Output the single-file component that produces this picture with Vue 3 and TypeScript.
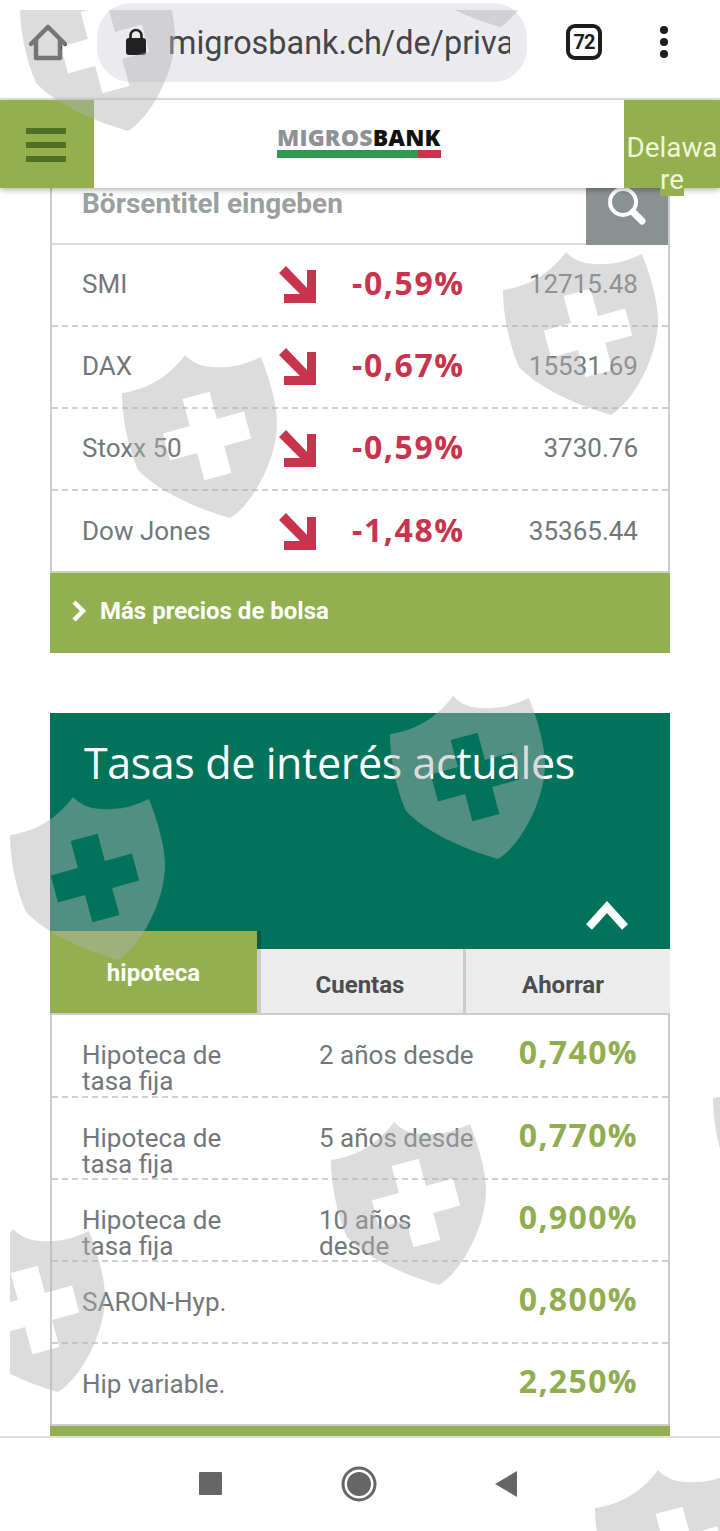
<script setup lang="ts">
interface Quote { name: string; pct: string; value: string }
interface Rate { name: string; term: string; value: string }

const quotes: Quote[] = [
  { name: 'SMI', pct: '-0,59%', value: '12715.48' },
  { name: 'DAX', pct: '-0,67%', value: '15531.69' },
  { name: 'Stoxx 50', pct: '-0,59%', value: '3730.76' },
  { name: 'Dow Jones', pct: '-1,48%', value: '35365.44' },
]
const rates: Rate[] = [
  { name: 'Hipoteca de tasa fija', term: '2 años desde', value: '0,740%' },
  { name: 'Hipoteca de tasa fija', term: '5 años desde', value: '0,770%' },
  { name: 'Hipoteca de tasa fija', term: '10 años desde', value: '0,900%' },
  { name: 'SARON-Hyp.', term: '', value: '0,800%' },
  { name: 'Hip variable.', term: '', value: '2,250%' },
]
const shields: [number, number][] = [
  [20, -42], [392, -146], [503, 242], [122, 345], [390, 686],
  [10, 787], [331, 1112], [-50, 1219], [713, 1050], [595, 1460],
]
const shieldPath =
  'M0 38C28 34 48 20 63 0C72 10 85 13 101 12C115 12 128 7 139 2C148 25 155 50 155 68C155 105 130 150 108 163C70 152 35 135 16 115C5 90 0 60 0 38Z' +
  'M60.6 44L87.6 36.8L94.9 63.9L122 56.6L129.2 83.6L102.1 90.9L109.4 118L82.4 125.2L75.1 98.1L48 105.4L40.8 78.4L67.9 71.1Z'
</script>

<template>
  <div class="screen">
    <div class="toolbar">
      <svg class="home" width="38" height="38" viewBox="0 0 38 38">
        <path d="M2 20L19 3L36 20M7 16V34H31V16" fill="none" stroke="#444" stroke-width="4.5" stroke-linejoin="round" stroke-linecap="round" />
      </svg>
      <div class="pill">
        <svg class="lock" width="22" height="28" viewBox="0 0 22 28">
          <path d="M5.5 12V7.5a5.5 5.5 0 0 1 11 0V12" fill="none" stroke="#222" stroke-width="2.6" />
          <rect x="1" y="10" width="20" height="17" rx="3" fill="#222" />
        </svg>
        <span class="url">migrosbank.ch/de/privat</span>
      </div>
      <div class="tabcount">72</div>
      <div class="dots"><i></i><i></i><i></i></div>
    </div>

    <header class="site-head">
      <div class="burger"><i></i><i></i><i></i></div>
      <div class="logo">
        <div class="logo-text"><span class="migros">MIGROS</span><span class="bank">BANK</span></div>
        <div class="logo-bar"><i class="bar-green"></i><i class="bar-red"></i></div>
      </div>
      <div class="region"><span>Delawa re</span></div>
    </header>

    <main class="content">
      <section class="card">
        <div class="search">
          <span class="search-label">Börsentitel eingeben</span>
          <div class="search-btn">
            <svg width="82" height="56" viewBox="0 0 82 56">
              <circle cx="37" cy="14" r="13" fill="none" stroke="#fff" stroke-width="4" />
              <path d="M47 24L56 33" stroke="#fff" stroke-width="7" stroke-linecap="round" />
            </svg>
          </div>
        </div>
        <div v-for="q in quotes" :key="q.name" class="quote">
          <span class="q-name">{{ q.name }}</span>
          <svg class="q-arrow" width="37" height="37" viewBox="0 0 37 37">
            <path d="M5 37H37V4H28V22L7 0L0 7L21 28H5Z" fill="#c8334d" />
          </svg>
          <span class="q-pct">{{ q.pct }}</span>
          <span class="q-value">{{ q.value }}</span>
        </div>
      </section>
      <a class="more">
        <svg width="16" height="22" viewBox="0 0 16 22">
          <path d="M3 2L12 11L3 20" fill="none" stroke="#fff" stroke-width="4.5" />
        </svg>
        <span>Más precios de bolsa</span>
      </a>

      <section class="rates-head">
        <h2>Tasas de interés actuales</h2>
        <svg class="collapse" width="44" height="30" viewBox="0 0 44 30">
          <path d="M4 26L22 6L40 26" fill="none" stroke="#fff" stroke-width="8" />
        </svg>
      </section>
      <div class="tabs">
        <div class="tab active">hipoteca</div>
        <div class="tab middle">Cuentas</div>
        <div class="tab last">Ahorrar</div>
      </div>
      <section class="card rates">
        <div v-for="(r, i) in rates" :key="i" class="rate" :class="{ single: !r.term }">
          <span class="r-name">{{ r.name }}</span>
          <span class="r-term">{{ r.term }}</span>
          <span class="r-value">{{ r.value }}</span>
        </div>
      </section>
      <div class="more-strip"></div>
    </main>

    <nav class="sysnav">
      <i class="nav-square"></i>
      <svg width="36" height="36" viewBox="0 0 36 36">
        <circle cx="18" cy="18" r="16" fill="none" stroke="#666" stroke-width="3" />
        <circle cx="18" cy="18" r="12" fill="#666" />
      </svg>
      <svg class="nav-back" width="24" height="28" viewBox="0 0 24 28">
        <path d="M1 14L23 1V27Z" fill="#666" />
      </svg>
    </nav>

    <div class="watermarks" aria-hidden="true">
      <svg
        v-for="(s, i) in shields"
        :key="i"
        class="shield"
        :style="{ left: s[0] + 'px', top: s[1] + 'px' }"
        width="155"
        height="163"
        viewBox="0 0 155 163"
      >
        <path :d="shieldPath" fill="#b2b2b2" fill-opacity="0.45" fill-rule="evenodd" />
      </svg>
    </div>
  </div>
</template>

<style>
html, body { margin: 0; background: #fff; }
</style>

<style scoped>
.screen {
  position: relative;
  width: 720px;
  height: 1531px;
  overflow: hidden;
  background: #fff;
  font-family: Roboto, "Liberation Sans", sans-serif;
  color: #72787a;
  display: flex;
  flex-direction: column;
}
.toolbar {
  height: 98px;
  flex: none;
  display: flex;
  align-items: flex-start;
  border-bottom: 2px solid #e4e4e4;
  background: #fff;
}
.home { margin: 24px 0 0 29px; flex: none; }
.pill {
  margin: 3px 0 0 30px;
  width: 430px;
  height: 79px;
  border-radius: 34px;
  background: #ebebef;
  display: flex;
  align-items: center;
  flex: none;
}
.lock { margin: 0 0 0 28px; flex: none; position: relative; top: -1px; }
.url {
  margin-left: 21px;
  width: 342px;
  overflow: hidden;
  white-space: nowrap;
  font-size: 32.4px;
  color: #454547;
}
.tabcount {
  margin: 24px 0 0 39px;
  width: 36px;
  height: 36px;
  box-sizing: border-box;
  border: 4px solid #1d1d1d;
  border-radius: 9px;
  font-size: 20px;
  font-weight: 700;
  letter-spacing: -1px;
  line-height: 28px;
  text-align: center;
  color: #1d1d1d;
  flex: none;
}
.dots {
  margin: 26px 0 0 58px;
  display: flex;
  flex-direction: column;
  gap: 4px;
}
.dots i { width: 8px; height: 8px; border-radius: 50%; background: #1d1d1d; display: block; }

.site-head {
  position: relative;
  z-index: 5;
  height: 88px;
  flex: none;
  display: flex;
  background: #fff;
  box-shadow: 0 2px 6px rgba(0, 0, 0, .3);
}
.burger {
  width: 94px;
  background: #93af4e;
  box-sizing: border-box;
  padding: 28px 0 0 26px;
  display: flex;
  flex-direction: column;
  gap: 8px;
}
.burger i { display: block; width: 40px; height: 6px; background: #4e7020; }
.logo {
  flex: 1;
  display: flex;
  flex-direction: column;
  align-items: center;
  padding-top: 24px;
}
.logo-text {
  font-family: "Open Sans", sans-serif;
  font-weight: 800;
  font-size: 23px;
  line-height: 26px;
  letter-spacing: .2px;
  width: 164px;
  white-space: nowrap;
}
.migros { color: #8e9294; }
.bank { color: #111; }
.logo-bar { display: flex; width: 164px; height: 8px; }
.bar-green { display: block; width: 141px; background: #2f9a4f; }
.bar-red { display: block; width: 23px; background: #c8334d; }
.region {
  width: 96px;
  background: #93af4e;
  text-align: center;
  padding-top: 32px;
  box-sizing: border-box;
  font-size: 27.8px;
  line-height: 32px;
  color: #f0f6d8;
  height: 88px;
}
.region span { background: #93af4e; }

.content { flex: 1; padding: 0 50px; min-height: 0; overflow: hidden; }
.card {
  border-left: 2px solid #ccc;
  border-right: 2px solid #ccc;
  background: #fff;
}
.search {
  height: 57px;
  box-sizing: border-box;
  border-bottom: 2px solid #ddd;
  display: flex;
  justify-content: space-between;
  padding-left: 30px;
}
.search-label {
  font-size: 28px;
  font-weight: 700;
  color: #9a9fa1;
  line-height: 32px;
}
.search-btn { width: 82px; height: 57px; background: #8b9093; }
.search-btn svg { display: block; }
.quote {
  height: 82px;
  box-sizing: border-box;
  padding: 0 30px 2px 30px;
  display: flex;
  align-items: center;
  font-size: 26px;
  border-bottom: 2px dashed #d0d0d0;
}
.quote:last-child { border-bottom: 0; height: 80px; padding-bottom: 0; }
.q-name { width: 197px; flex: none; }
.q-arrow { flex: none; margin-right: 36px; }
.q-pct {
  font-family: "Open Sans", sans-serif;
  font-weight: 700;
  font-size: 32px;
  letter-spacing: 1.6px;
  color: #c8334d;
  position: relative;
  top: -2px;
}
.q-value { margin-left: auto; }
.more {
  display: flex;
  align-items: center;
  gap: 13px;
  height: 82px;
  box-sizing: border-box;
  padding: 0 0 4px 21px;
  border-top: 2px solid #c9cfc5;
  background: #92b04f;
  color: #fff;
  font-size: 24px;
  font-weight: 700;
}
.rates-head {
  position: relative;
  margin-top: 60px;
  height: 236px;
  background: #00735a;
  box-sizing: border-box;
  padding: 21px 34px;
}
.rates-head h2 {
  margin: 0;
  font-family: "Open Sans", sans-serif;
  font-weight: 400;
  font-size: 43px;
  letter-spacing: -.4px;
  line-height: 58px;
  color: #fff;
  white-space: nowrap;
}
.collapse { position: absolute; right: 41px; top: 188px; }
.tabs {
  position: relative;
  margin-top: -18px;
  height: 82px;
  display: flex;
  align-items: flex-end;
  font-size: 24px;
  font-weight: 700;
}
.tab {
  height: 64px;
  background: #ececec;
  color: #4b4d4f;
  box-sizing: border-box;
  text-align: center;
  line-height: 72px;
}
.tab.active {
  width: 211px;
  height: 82px;
  background: #93af4e;
  background-clip: padding-box;
  color: #fff;
  border-right: 4px solid rgba(0, 0, 0, .2);
  line-height: 84px;
}
.tab.middle { width: 205px; border-right: 3px solid #ccc; padding-right: 4px; }
.tab.last { flex: 1; padding-right: 10px; }
.rates { border-top: 2px solid #ccc; }
.rate {
  height: 82px;
  box-sizing: border-box;
  padding: 27px 30px 0 30px;
  display: flex;
  align-items: flex-start;
  font-size: 26px;
  line-height: 26px;
  border-bottom: 2px dashed #d0d0d0;
}
.rate:first-child { height: 83px; }
.rate.single { padding-top: 0; align-items: center; }
.rate:last-child { border-bottom: 0; height: 80px; }
.r-name { width: 237px; flex: none; padding-right: 60px; box-sizing: border-box; }
.r-term { width: 160px; flex: none; }
.r-value {
  margin-left: auto;
  font-family: "Open Sans", sans-serif;
  font-weight: 700;
  font-size: 32px;
  letter-spacing: 1.35px;
  line-height: 26px;
  color: #91ad52;
  position: relative;
  top: -3px;
}
.more-strip { height: 12px; background: #92b04f; border-top: 2px solid #c9cfc5; box-sizing: border-box; }

.sysnav {
  position: relative;
  z-index: 6;
  height: 95px;
  flex: none;
  box-sizing: border-box;
  border-top: 2px solid #ddd;
  background: #fff;
  display: flex;
  align-items: center;
  padding: 0 0 2px 199px;
  gap: 119px;
}
.sysnav svg { flex: none; }
.nav-back { margin-left: -2px; }
.nav-square { display: block; width: 23px; height: 23px; background: #666; border-radius: 1px; }

.watermarks {
  position: absolute;
  z-index: 10;
  inset: 10px 0 0 0;
  overflow: hidden;
  clip-path: inset(0 0 0 10px);
  pointer-events: none;
}
.shield { position: absolute; }
</style>
